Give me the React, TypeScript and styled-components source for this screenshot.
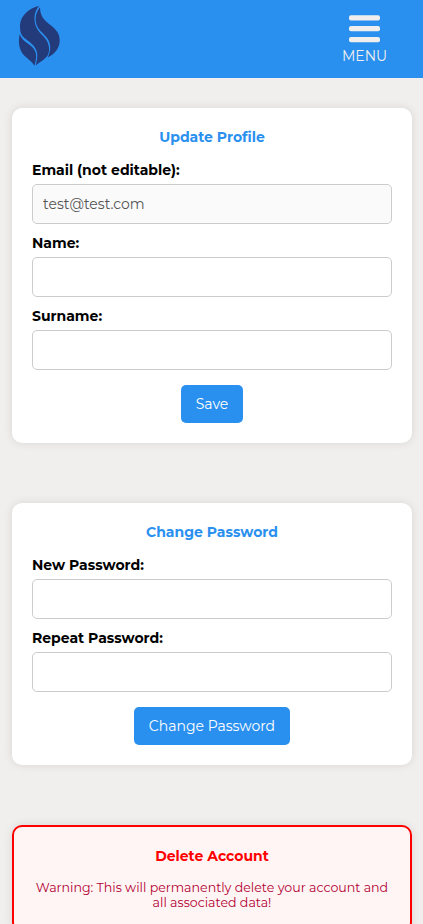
import React from "react";
import styled, { createGlobalStyle } from "styled-components";

const GlobalStyle = createGlobalStyle`
  * { box-sizing: border-box; }
  body {
    margin: 0;
    background: #f0efed;
    font-family: Montserrat, Inter, sans-serif;
    font-size: 14px;
    color: #000;
    overflow-x: hidden;
  }
`;

const Page = styled.div`
  height: 924px;
  overflow: hidden;
`;

const Header = styled.header`
  height: 78px;
  padding: 0 36px 0 16px;
  display: flex;
  justify-content: space-between;
  background: #2a90f0;
`;

const Logo = styled.svg`
  display: block;
  width: 48px;
  height: 68px;
  margin-top: 2px;
`;

const MenuButton = styled.button`
  display: flex;
  flex-direction: column;
  align-items: center;
  width: 45px;
  height: 66px;
  padding: 15px 0 0;
  border: 0;
  background: none;
  color: #f0efed;
  font: inherit;
  white-space: nowrap;
`;

const Bars = styled.svg`
  display: block;
  flex: none;
  width: 33px;
  height: 28px;
`;

const MenuLabel = styled.span`
  line-height: 18px;
  margin-top: 4px;
`;

const Main = styled.main`
  display: flex;
  flex-direction: column;
  align-items: center;
  gap: 60px;
  padding: 30px 0 0 1px;
`;

const Card = styled.section<{ $danger?: boolean }>`
  width: 400px;
  padding: 20px;
  border-radius: 10px;
  border: ${(p) => (p.$danger ? "2px solid #f00" : "0")};
  background: ${(p) => (p.$danger ? "#fff5f5" : "#fff")};
  box-shadow: 0 0 10px rgba(0, 0, 0, 0.1);
  display: flex;
  flex-direction: column;
  align-items: center;
`;

const Title = styled.h2<{ $danger?: boolean }>`
  margin: 0 0 15px;
  font-size: 14px;
  line-height: 18px;
  font-weight: 700;
  color: ${(p) => (p.$danger ? "#f00" : "#2a90f0")};
`;

const Field = styled.label`
  display: block;
  width: 100%;
  & + & { margin-top: 10px; }
`;

const FieldName = styled.span`
  display: block;
  margin-bottom: 5px;
  font-weight: 700;
  line-height: 18px;
`;

const Input = styled.input`
  display: block;
  width: 100%;
  height: 40px;
  padding: 0 10px;
  border: 1px solid #ccc;
  border-radius: 5px;
  background: #fff;
  font: inherit;
  &:disabled { background: #fafafa; color: #545454; }
`;

const Button = styled.button`
  height: 38px;
  margin-top: 15px;
  padding: 0 15px;
  border: 0;
  border-radius: 5px;
  background: #2a90f0;
  color: #fff;
  font: inherit;
`;

const Warning = styled.p`
  margin: 0;
  font-size: 12.6px;
  line-height: 15px;
  text-align: center;
  color: #b30032;
`;

export default function App() {
  return (
    <>
      <GlobalStyle />
      <Page>
        <Header>
          <Logo viewBox="16 2 48 68" fill="#243b7b" aria-label="Flame logo">
            <path d="M39 5.700C29 8.500 20 15.500 20 25.500C20 28.500 20.200 31 21 33.500C22.500 37 26 39 29 41.500C34 45.500 37.300 49.500 37.300 55.500C37.300 59 36.500 62 35.600 65.500C40 62 46.500 58.500 48.300 54C50 49.500 49 44 46 39.500C42.500 34.500 37.500 31.500 35.600 25.500C33.400 18 34.500 11.500 39 5.700Z" />
            <path d="M40 7.300C35.800 12.500 34.700 18.500 36.500 24.500C38.500 30.500 43.500 33 47 38C51.300 44 51.300 50.500 47.500 57.500C55 54 59.700 48 59.700 40.500C59.700 34 56.500 30 51.700 26C47 22.500 40 18 40 7.300Z" />
            <path d="M19.800 34C18.500 39 18.500 44 20.200 49C22.300 56.500 31 59.500 34.400 65.700C36.500 59 37.300 53.500 33.500 48.500C30 43.500 21.500 41.500 19.800 34Z" />
          </Logo>
          <MenuButton>
            <Bars viewBox="0 0 33 28" fill="#f0efed">
              <rect x="1" y="0.200" width="31" height="5.200" rx="2" />
              <rect x="1" y="11" width="31" height="5.200" rx="2" />
              <rect x="1" y="22" width="31" height="5.200" rx="2" />
            </Bars>
            <MenuLabel>MENU</MenuLabel>
          </MenuButton>
        </Header>
        <Main>
          <Card>
            <Title>Update Profile</Title>
            <Field>
              <FieldName>Email (not editable):</FieldName>
              <Input disabled defaultValue="test@test.com" />
            </Field>
            <Field>
              <FieldName>Name:</FieldName>
              <Input />
            </Field>
            <Field>
              <FieldName>Surname:</FieldName>
              <Input />
            </Field>
            <Button>Save</Button>
          </Card>
          <Card>
            <Title>Change Password</Title>
            <Field>
              <FieldName>New Password:</FieldName>
              <Input type="password" />
            </Field>
            <Field>
              <FieldName>Repeat Password:</FieldName>
              <Input type="password" />
            </Field>
            <Button>Change Password</Button>
          </Card>
          <Card $danger>
            <Title $danger>Delete Account</Title>
            <Warning>
              Warning: This will permanently delete your account and all associated data!
            </Warning>
          </Card>
        </Main>
      </Page>
    </>
  );
}
